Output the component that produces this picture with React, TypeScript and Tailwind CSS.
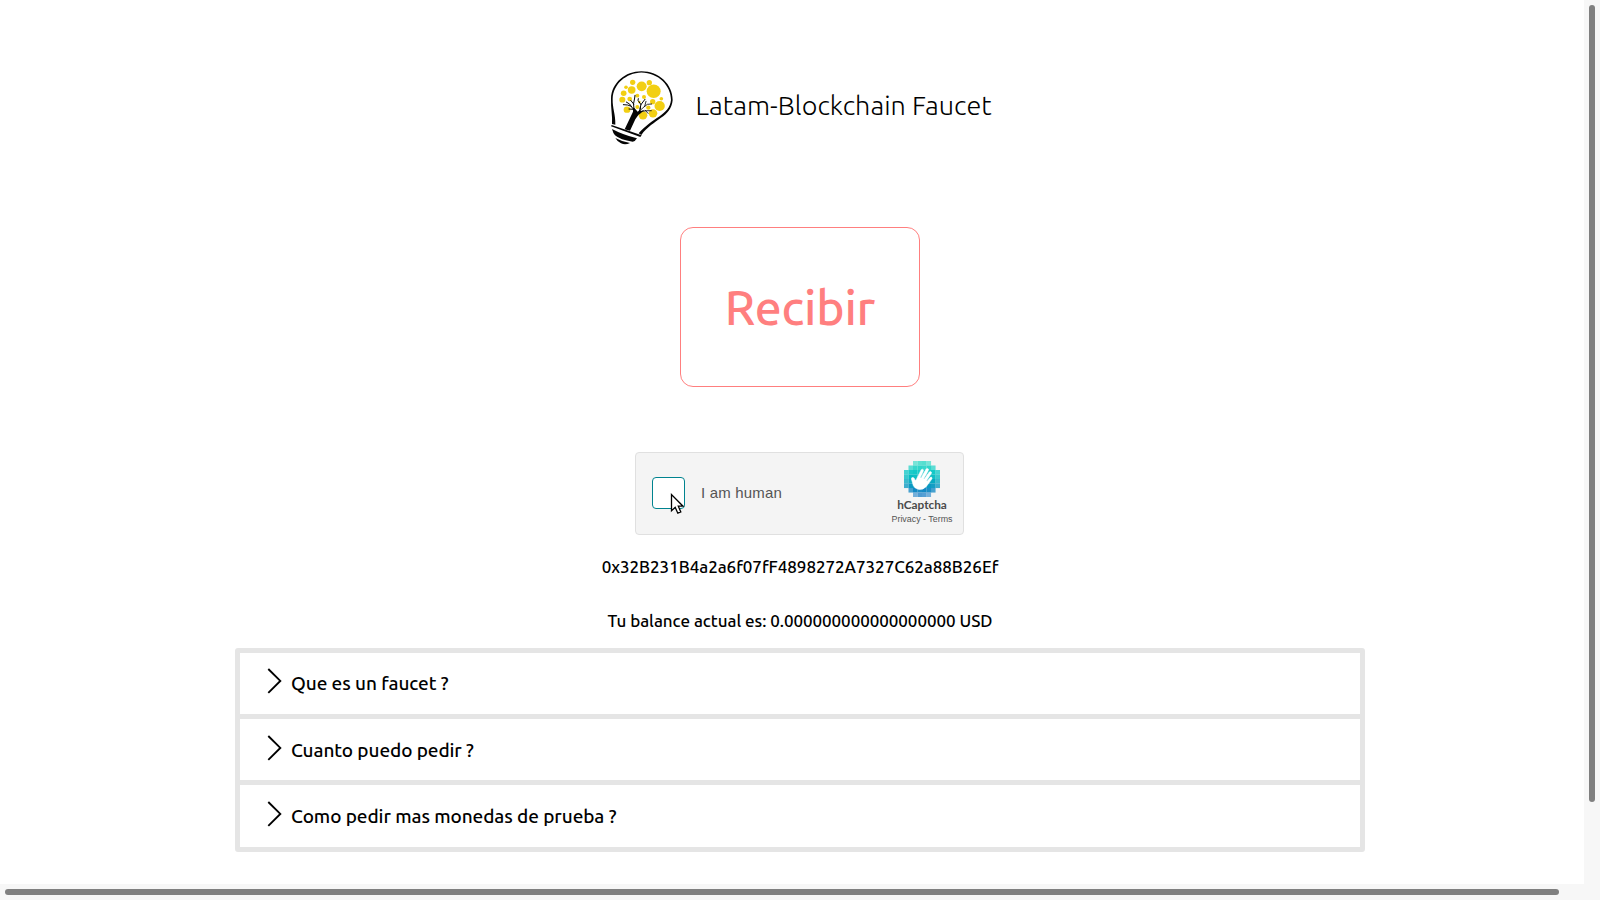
const questions = [
  { text: 'Que es un faucet ?', height: 'h-[61px]', pad: 'pt-[16px]' },
  { text: 'Cuanto puedo pedir ?', height: 'h-[61px]', pad: 'pt-[17px]' },
  { text: 'Como pedir mas monedas de prueba ?', height: 'h-[62px]', pad: 'pt-[17px]' },
];

const leaves = [
  [80, 49, 8], [130, 50, 8], [60, 64, 5.5], [107, 61, 15], [143, 76, 21],
  [77, 72, 11.5], [53, 82, 8.5], [49, 101, 9], [71, 99, 7], [94, 89, 6],
  [114, 93, 6], [140, 107, 8], [166, 98, 5.5], [161, 120, 15.5], [100, 108, 4],
  [94, 123, 6], [63, 131, 10], [127, 125, 6.5], [141, 142, 13], [111, 148, 13],
];

function BulbLogo() {
  return (
    <svg width="72" height="80" viewBox="0 0 216 240" aria-hidden="true">
      <path d="M18 174C20 150 14 126 15 98C17 50 58 16 106 16C160 16 200 56 200 102C196 154 142 158 106 207L98 202C139 154 190 148 195 102C195 60 158 20 106 19.5C60 21 22 54 20 98C19 126 29 146 28 176Z" fill="#050505" />
      {leaves.map(([x, y, r]) => (
        <ellipse key={`${x}-${y}`} cx={x} cy={y} rx={r} ry={r * 0.96} fill="#f2cf13" />
      ))}
      <path d="M56 190L81 137Q84 130 79 124L86 127L95 137Q102 133 102 119L105 120Q105 130 103 136L116 131L104 142Q95 146 88 160L72 194Z" fill="#050505" />
      <g fill="none" stroke="#050505" strokeLinecap="round">
        <path d="M86 138Q82 121 65 117L52 116M83 130L69 129M77 122Q73 113 61 108" strokeWidth="3" />
        <path d="M84 130Q80 114 86 96L87 88M83 114L74 103M102 128Q102 115 113 105L117 100M105 116L96 103L97 98" strokeWidth="3" />
        <path d="M98 138Q108 126 124 115L137 114M116 121L120 106M102 137Q121 133 136 134M118 133L126 142" strokeWidth="2.5" />
      </g>
      <path d="M17 177L107 208L103 213L15 181Z" fill="#050505" />
      <path d="M18 189Q52 207 93 217Q88 226 80 227Q43 222 27 208Q21 201 18 189Z" fill="#050505" />
      <path d="M28 216Q48 227 72 231Q58 238 45 232Q34 227 28 216Z" fill="#050505" />
    </svg>
  );
}

const rows = [
  { from: 2, to: 6, y: 0, fill: '#55dfd0' },
  { from: 1, to: 7, y: 1, fill: '#2fd5ca' },
  { from: 0, to: 8, y: 2, fill: '#12c9c8' },
  { from: 0, to: 8, y: 3, fill: '#05bcc3' },
  { from: 0, to: 8, y: 4, fill: '#06a9c1' },
  { from: 0, to: 8, y: 5, fill: '#0a99c2' },
  { from: 1, to: 7, y: 6, fill: '#1489c4' },
  { from: 2, to: 6, y: 7, fill: '#4f9bd2' },
];

function CaptchaLogo() {
  return (
    <svg width="36" height="36" viewBox="0 0 32 32" aria-hidden="true">
      {rows.map(({ from, to, y, fill }) =>
        Array.from({ length: to - from }, (_, i) => {
          const x = from + i;
          const edge = x === from || x === to - 1;
          return (
            <rect key={`${x}-${y}`} x={x * 4} y={y * 4} width="4.05" height="4.05" fill={fill} opacity={edge ? 0.78 : (x + y) % 2 ? 0.96 : 1} />
          );
        }),
      )}
      <path
        d="M8.6 23.2L6.9 17.3Q6.8 15.7 8.3 15.9Q9.6 16.3 10.1 18.2L10.9 18.5L15.5 9.2Q16.6 8 17.5 9.1Q17.8 9.8 17.2 11L14.8 16L15.4 16.3L19.9 8.5Q21 7.4 22 8.5Q22.2 9.2 21.7 10.1L17.8 17.1L18.3 17.4L22.8 11Q23.9 10.1 24.7 11.2Q24.9 11.9 24.4 12.7L20.3 18.8L20.8 19.2L23.5 15.9Q24.6 15.1 25.2 16.2Q25.4 16.8 24.9 17.6L20 24.1Q17 27.3 13 26.5Q9.9 25.8 8.6 23.2Z"
        fill="#fff"
        stroke="#fff"
        strokeWidth="0.5"
        transform="translate(-.3 -1.3)"
      />
    </svg>
  );
}

function Pointer() {
  return (
    <svg className="absolute left-[16.5px] top-[14.5px]" width="15" height="22" viewBox="0 0 15 22" aria-hidden="true">
      <path d="M1.5 1.6V17.8L5.2 14.3L7.8 20.2L10.8 18.9L8.3 13.2H13Z" fill="#fff" stroke="#000" strokeWidth="1.3" />
    </svg>
  );
}

export default function App() {
  return (
    <div className="flex h-[900px] w-[1600px] flex-col overflow-hidden bg-[#f7f7f7] font-['Ubuntu','Noto_Sans',sans-serif] font-medium text-black">
      <div className="flex h-[884px]">
        <main className="flex w-[1584px] flex-col items-center bg-white pl-4 pt-[66px]">
          <header className="flex h-20 w-[388px]">
            <BulbLogo />
            <h1 className="ml-[17.5px] mt-[19px] whitespace-nowrap text-[27px] font-[350] leading-[40px] tracking-[0.03px]">Latam-Blockchain Faucet</h1>
          </header>

          <button className="mt-[81px] flex h-[160px] w-[240px] items-center justify-center rounded-[13px] border border-[#ff7f7f] text-[48px] leading-none tracking-[-0.2px] text-[#ff7f7f]">
            Recibir
          </button>

          <section className="mr-px mt-[65px] flex h-[83px] w-[329px] rounded border border-[#e0e0e0] bg-[#f4f4f4] pl-[16px] font-['Liberation_Sans',Arial,sans-serif] font-normal text-[#555]">
            <div className="relative mt-[24px] h-[32px] w-[33px] shrink-0 rounded border border-[#00838f] bg-white">
              <Pointer />
            </div>
            <span className="ml-[16px] mt-[30px] w-[169px] shrink-0 text-[15px] leading-[20px] tracking-[0.18px]">I am human</span>
            <div className="ml-[12px] flex w-[80px] shrink-0 flex-col items-center pt-[8px]">
              <CaptchaLogo />
              <span className="font-['Lato',sans-serif] text-[11.8px] font-bold leading-[16px] text-[#4a4a4a]">hCaptcha</span>
              <span className="whitespace-nowrap text-[8.9px] leading-[12px]">Privacy - Terms</span>
            </div>
          </section>

          <p className="mt-[20px] text-[17px] leading-6 tracking-[-0.04px]">0x32B231B4a2a6f07fF4898272A7327C62a88B26Ef</p>
          <p className="mt-[30px] text-[17px] leading-6 tracking-[-0.05px]">Tu balance actual es: 0.000000000000000000 USD</p>

          <ul className="mt-[15px] flex w-[1130px] flex-col gap-[5px] rounded-[3px] border-[5px] border-[#e5e5e5] bg-[#e5e5e5]">
            {questions.map((q) => (
              <li key={q.text} className={`flex bg-white pl-[27px] ${q.height} ${q.pad}`}>
                <svg className="-mt-px" width="16" height="26" viewBox="0 0 16 26" fill="none" stroke="#000" strokeWidth="1.9" aria-hidden="true">
                  <path d="M1.3 1L13.3 12.9L1.3 24.8" />
                </svg>
                <span className="ml-[8px] mt-[2px] text-[19px] leading-[24px] tracking-[-0.08px]">{q.text}</span>
              </li>
            ))}
          </ul>
        </main>
        <div className="w-4 pl-[5px] pt-[5px]">
          <div className="h-[797px] w-[6px] rounded-full bg-[#808080]" />
        </div>
      </div>
      <div className="h-4 pl-[5px] pt-[5px]">
        <div className="h-[6px] w-[1554px] rounded-full bg-[#808080]" />
      </div>
    </div>
  );
}
